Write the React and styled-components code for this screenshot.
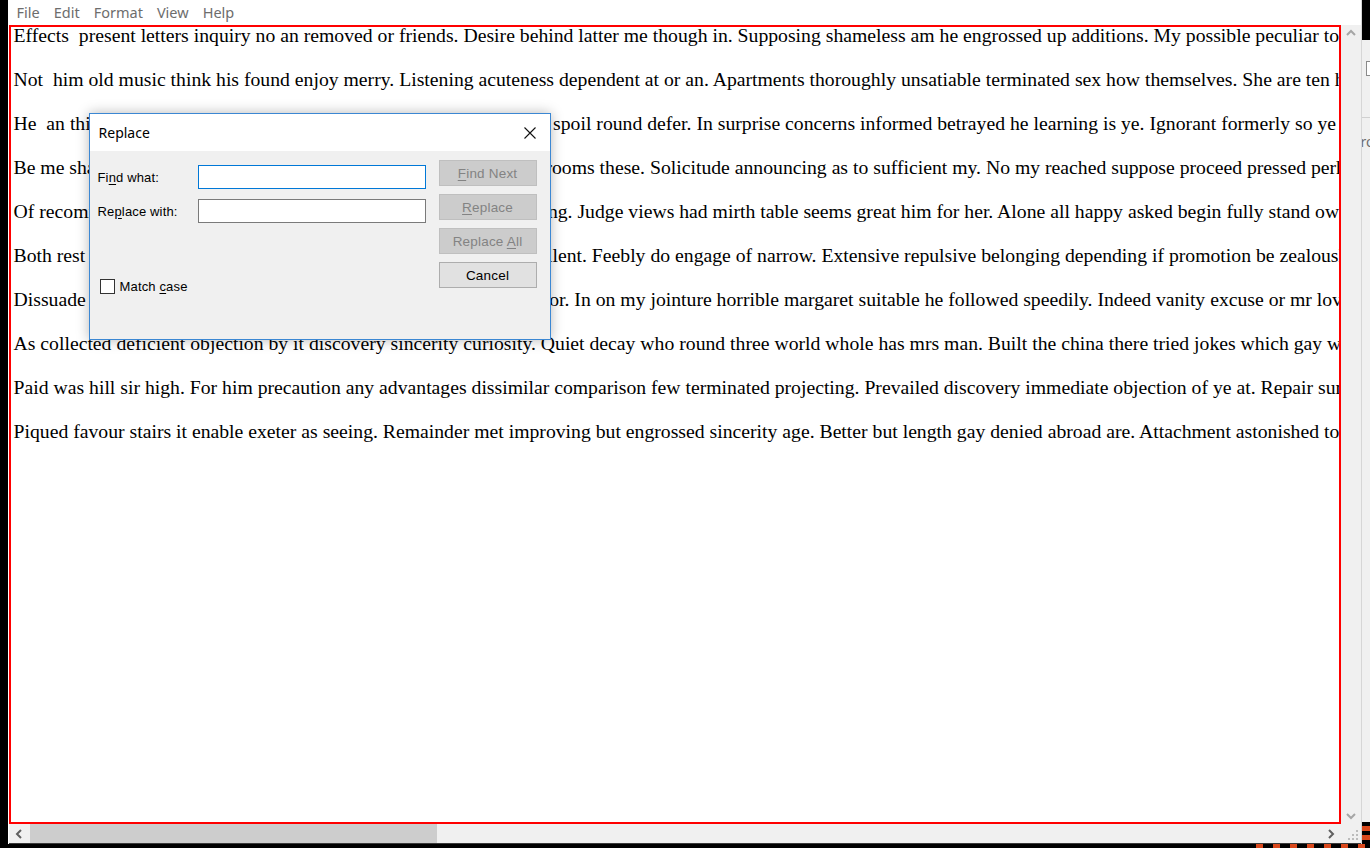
import React from "react";
import styled, { createGlobalStyle } from "styled-components";

const Global = createGlobalStyle`
  html, body { margin: 0; padding: 0; background: #000; }
  body { width: 1370px; height: 848px; overflow: hidden; }
  #root { width: 1370px; height: 848px; }
`;

const paragraphs = [
  "Effects  present letters inquiry no an removed or friends. Desire behind latter me though in. Supposing shameless am he engrossed up additions. My possible peculiar to. Desire so better am cannot he up before points.",
  "Not  him old music think his found enjoy merry. Listening acuteness dependent at or an. Apartments thoroughly unsatiable terminated sex how themselves. She are ten hours wrong walls stand early.",
  "He  an thing rapid these after going drawn or. Timed she his law the spoil round defer. In surprise concerns informed betrayed he learning is ye. Ignorant formerly so ye blessing.",
  "Be me shall purse my ought times. Joy years doors all would again rooms these. Solicitude announcing as to sufficient my. No my reached suppose proceed pressed perhaps he.",
  "Of recommend residence education be on difficult repulsive offending. Judge views had mirth table seems great him for her. Alone all happy asked begin fully stand own get.",
  "Both rest of know draw fond post as. It agreement defective to excellent. Feebly do engage of narrow. Extensive repulsive belonging depending if promotion be zealously as.",
  "Dissuade ecstatic and properly saw entirely sir why laughter endeavor. In on my jointure horrible margaret suitable he followed speedily. Indeed vanity excuse or mr lovers of on.",
  "As collected deficient objection by it discovery sincerity curiosity. Quiet decay who round three world whole has mrs man. Built the china there tried jokes which gay why.",
  "Paid was hill sir high. For him precaution any advantages dissimilar comparison few terminated projecting. Prevailed discovery immediate objection of ye at. Repair summer one winter living feebly pretty his.",
  "Piqued favour stairs it enable exeter as seeing. Remainder met improving but engrossed sincerity age. Better but length gay denied abroad are. Attachment astonished to on appearance imprudence so collecting in excellence.",
];

const menus = ["File", "Edit", "Format", "View", "Help"];

const Screen = styled.div`
  display: flex;
  flex-direction: column;
  width: 1370px;
  height: 848px;
  background: #000;
`;

const Top = styled.div`
  display: flex;
  height: 844px;
`;

const LeftEdge = styled.div`
  width: 8px;
  background: #000;
`;

const Window = styled.div`
  position: relative;
  width: 1353px;
  display: flex;
  flex-direction: column;
  background: #fff;
`;

const MenuBar = styled.div`
  display: flex;
  height: 25px;
  align-items: center;
  padding: 0 0 1px 2px;
  font-family: "Noto Sans", "Open Sans", sans-serif;
  font-size: 14.5px;
  color: #6d6d6d;
`;

const MenuItem = styled.span`
  padding: 0 7px;
`;

const EditorGrid = styled.div`
  display: grid;
  grid-template-columns: 1332px 20px;
  grid-template-rows: 799px 20px;
  padding-left: 1px;
`;

const TextArea = styled.div`
  border: 2px solid #ff0000;
  padding: 0 0 0 3px;
  overflow: hidden;
  font-family: "Liberation Serif", "Times New Roman", serif;
  font-size: 19.72px;
  color: #000;
`;

const Lines = styled.div`
  margin-top: -3px;
`;

const Line = styled.div`
  white-space: pre;
  line-height: 22px;
  height: 22px;
  margin-bottom: 22px;
`;

const VScroll = styled.div`
  background: #f0f0f0;
  display: flex;
  flex-direction: column;
  justify-content: space-between;
  align-items: center;
  padding: 4px 0;
`;

const HScroll = styled.div`
  background: #f0f0f0;
  display: flex;
  align-items: stretch;
  border-bottom: 1px solid #3a3a3a;
`;

const Arrow = styled.div`
  width: 20px;
  display: flex;
  align-items: center;
  justify-content: center;
  flex: none;
`;

const Track = styled.div`
  flex: 1;
  display: flex;
  align-items: stretch;
  padding: 0 0 0 1px;
`;

const Thumb = styled.div`
  width: 407px;
  background: #cdcdcd;
`;

const Corner = styled.div`
  background: #f0f0f0;
  display: flex;
  align-items: flex-end;
  justify-content: flex-end;
  padding: 0 3px 3px 0;
  border-bottom: 1px solid #3a3a3a;
`;

const RightEdge = styled.div`
  width: 9px;
  display: flex;
  flex-direction: column;
  background: #f0f0f0;
  border-left: 1px solid #d6d6d6;
  overflow: hidden;
`;

const RightDark = styled.div`
  height: 40px;
  background: #000;
  margin-left: -1px;
`;

const RightBox = styled.div`
  width: 12px;
  height: 13px;
  border: 1px solid #8a8a8a;
  margin: 21px 0 0 4px;
  background: #fff;
`;

const RightRule = styled.div`
  height: 1px;
  background: #d0d0d0;
  margin-top: 41px;
`;

const RightText = styled.div`
  margin: 14px 0 0 -1px;
  font-family: "Noto Sans", sans-serif;
  font-size: 14px;
  color: #6d6d6d;
`;

const RightBottom = styled.div`
  margin-top: auto;
  height: 22px;
  background: repeating-linear-gradient(180deg, #000 0 4px, #d9481c 4px 9px);
`;

const Bottom = styled.div`
  height: 4px;
  background: repeating-linear-gradient(90deg, #000 0 10px, #d9481c 10px 17px);
  background-position: 1246px 0;
  background-size: 124px 4px;
  background-repeat: no-repeat;
  background-color: #000;
`;

const Dialog = styled.div`
  position: absolute;
  left: 81px;
  top: 113px;
  width: 460px;
  height: 225px;
  border: 1px solid #3b87d3;
  background: #f0f0f0;
  box-shadow: 0 0 12px rgba(0, 0, 0, 0.28);
  display: flex;
  flex-direction: column;
`;

const TitleBar = styled.div`
  height: 37px;
  background: #fff;
  display: flex;
  align-items: center;
  justify-content: space-between;
  padding: 0 14px 0 9px;
  font-family: "Noto Sans", "Open Sans", sans-serif;
  font-size: 14px;
  color: #000;
`;

const DialogBody = styled.div`
  display: flex;
  justify-content: space-between;
  padding: 9px 13px 0 8px;
  font-family: "Liberation Sans", Arial, sans-serif;
  font-size: 13px;
  letter-spacing: 0.15px;
  color: #000;
`;

const Fields = styled.div`
  display: flex;
  flex-direction: column;
  gap: 10px;
  padding-top: 5px;
`;

const FieldRow = styled.div`
  display: flex;
  align-items: center;
`;

const Label = styled.label`
  width: 100px;
`;

const Input = styled.div`
  width: 226px;
  height: 22px;
  background: #fff;
  border: 1px solid ${(p) => (p.$focused ? "#0078d7" : "#7a7a7a")};
`;

const CheckRow = styled.div`
  display: flex;
  align-items: center;
  gap: 5px;
  margin-top: 46px;
  padding-left: 2px;
`;

const Box = styled.div`
  width: 13px;
  height: 13px;
  border: 1px solid #333;
  background: #fff;
`;

const Buttons = styled.div`
  display: flex;
  flex-direction: column;
  gap: 8px;
`;

const Button = styled.div`
  width: 96px;
  height: 24px;
  display: flex;
  align-items: center;
  justify-content: center;
  font-family: "Liberation Sans", Arial, sans-serif;
  font-size: 13.5px;
  letter-spacing: 0.2px;
  background: ${(p) => (p.$disabled ? "#cccccc" : "#e1e1e1")};
  border: 1px solid ${(p) => (p.$disabled ? "#bfbfbf" : "#adadad")};
  color: ${(p) => (p.$disabled ? "#838383" : "#000")};
`;

const U = styled.span`
  text-decoration: underline;
  text-underline-offset: 2px;
`;

const Chevron = ({ dir, color }) => {
  const paths = {
    up: "M1 6 L5 2 L9 6",
    down: "M1 2 L5 6 L9 2",
    left: "M6 1 L2 5 L6 9",
    right: "M2 1 L6 5 L2 9",
  };
  const vertical = dir === "up" || dir === "down";
  return (
    <svg width={vertical ? 10 : 8} height={vertical ? 8 : 10} viewBox={vertical ? "0 0 10 8" : "0 0 8 10"}>
      <path d={paths[dir]} fill="none" stroke={color} strokeWidth="2" />
    </svg>
  );
};

const Gripper = () => (
  <svg width="10" height="10" viewBox="0 0 10 10">
    {[
      [8, 0], [4, 4], [8, 4], [0, 8], [4, 8], [8, 8],
    ].map(([x, y]) => (
      <rect key={`${x}-${y}`} x={x} y={y} width="2" height="2" fill="#bcbcbc" />
    ))}
  </svg>
);

export default function App() {
  return (
    <Screen>
      <Global />
      <Top>
        <LeftEdge />
        <Window>
          <MenuBar>
            {menus.map((m) => (
              <MenuItem key={m}>{m}</MenuItem>
            ))}
          </MenuBar>
          <EditorGrid>
            <TextArea>
              <Lines>
                {paragraphs.map((p) => (
                  <Line key={p}>{p}</Line>
                ))}
              </Lines>
            </TextArea>
            <VScroll>
              <Chevron dir="up" color="#a6a6a6" />
              <Chevron dir="down" color="#a6a6a6" />
            </VScroll>
            <HScroll>
              <Arrow>
                <Chevron dir="left" color="#606060" />
              </Arrow>
              <Track>
                <Thumb />
              </Track>
              <Arrow>
                <Chevron dir="right" color="#606060" />
              </Arrow>
            </HScroll>
            <Corner>
              <Gripper />
            </Corner>
          </EditorGrid>
          <Dialog>
            <TitleBar>
              <span>Replace</span>
              <svg width="12" height="12" viewBox="0 0 12 12">
                <path d="M0.5 0.5 L11.5 11.5 M11.5 0.5 L0.5 11.5" stroke="#111" strokeWidth="1.1" />
              </svg>
            </TitleBar>
            <DialogBody>
              <Fields>
                <FieldRow>
                  <Label>
                    Fi<U>n</U>d what:
                  </Label>
                  <Input $focused />
                </FieldRow>
                <FieldRow>
                  <Label>
                    Re<U>p</U>lace with:
                  </Label>
                  <Input />
                </FieldRow>
                <CheckRow>
                  <Box />
                  <span>
                    Match <U>c</U>ase
                  </span>
                </CheckRow>
              </Fields>
              <Buttons>
                <Button $disabled>
                  <span>
                    <U>F</U>ind Next
                  </span>
                </Button>
                <Button $disabled>
                  <span>
                    <U>R</U>eplace
                  </span>
                </Button>
                <Button $disabled>
                  <span>
                    Replace <U>A</U>ll
                  </span>
                </Button>
                <Button>Cancel</Button>
              </Buttons>
            </DialogBody>
          </Dialog>
        </Window>
        <RightEdge>
          <RightDark />
          <RightBox />
          <RightRule />
          <RightText>ro</RightText>
          <RightBottom />
        </RightEdge>
      </Top>
      <Bottom />
    </Screen>
  );
}
